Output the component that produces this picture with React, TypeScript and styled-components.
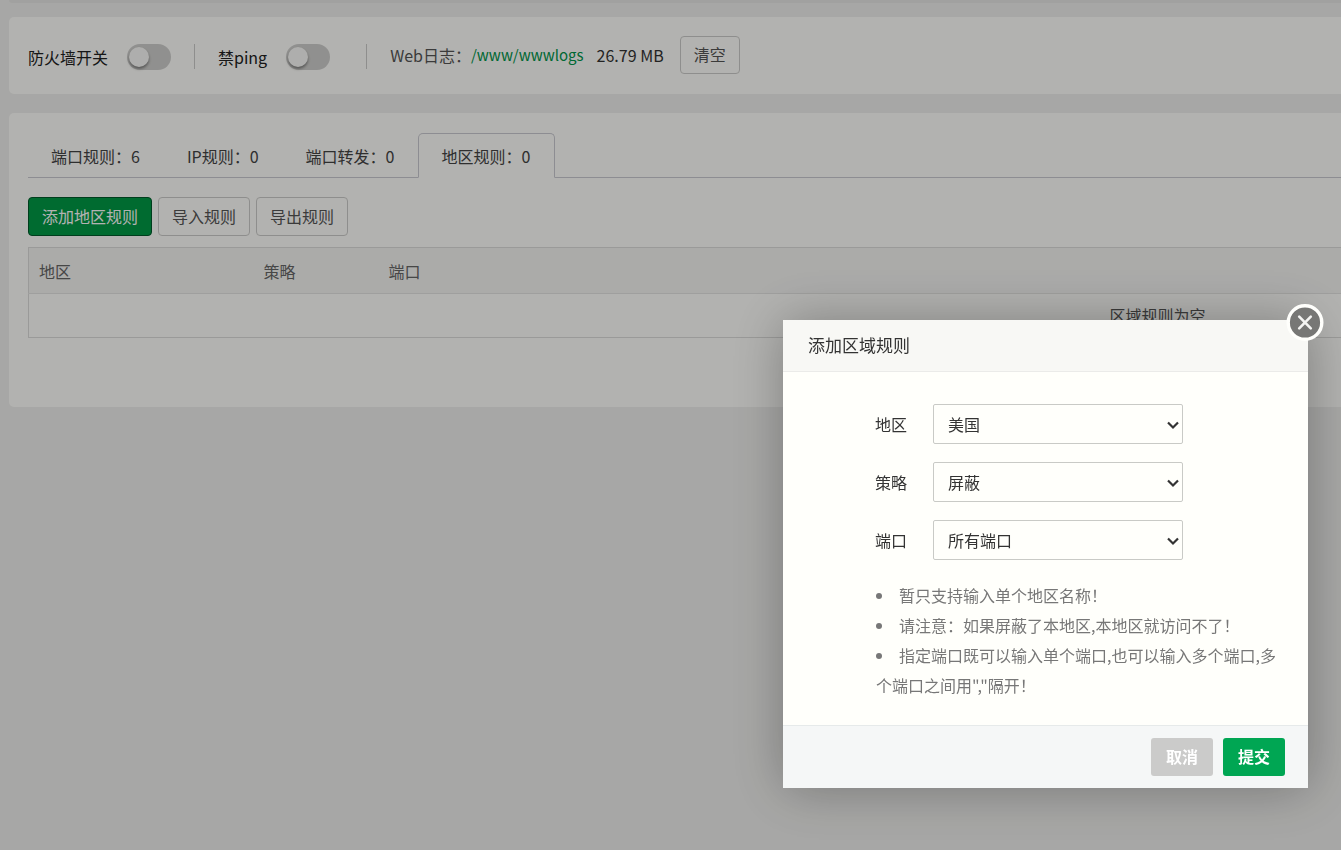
import React from "react";
import styled, { createGlobalStyle } from "styled-components";

const GlobalStyle = createGlobalStyle`
  * { box-sizing: border-box; }
  html, body { margin: 0; }
  body {
    background: #f0f0ee;
    color: #333;
    font-family: "Noto Sans CJK SC", "Noto Sans", sans-serif;
    font-size: 16px;
    line-height: 24px;
  }
  button, select, input { font: inherit; }
`;

const Viewport = styled.div`
  overflow: hidden;
  min-height: 100vh;
`;

const Page = styled.main`
  display: flex;
  flex-direction: column;
  gap: 19px;
  min-width: 2306px;
  padding-left: 9px;
`;

const Card = styled.section`
  background: #fffffc;
  border-radius: 5px;
`;

const CardTail = styled.div`
  height: 3px;
  margin-bottom: -5px;
  background: #e7e7e5;
  border-radius: 0 0 5px 5px;
`;

const FirewallBar = styled(Card)`
  display: flex;
  align-items: center;
  height: 77px;
  padding: 2px 19px 0;
`;

const SwitchLabel = styled.label`
  display: flex;
  align-items: center;
  gap: 19px;
  color: #222;
`;

const Switch = styled.input`
  appearance: none;
  width: 44px;
  height: 26px;
  margin: 0;
  border-radius: 13px;
  background: #cfcfcd;
  display: flex;
  align-items: center;
  padding: 0 2px;

  &::before {
    content: "";
    width: 20px;
    height: 20px;
    border-radius: 50%;
    background: #fafaf8;
    box-shadow: 0 2px 3px rgba(0, 0, 0, 0.4);
  }
  &:checked { background: #20a53a; justify-content: flex-end; }
`;

const Divider = styled.span`
  width: 1px;
  height: 25px;
  margin: 0 23px;
  background: #cccccb;
`;

const WideDivider = styled(Divider)`
  margin-left: 36px;
`;

const LogInfo = styled.div`
  display: flex;
  align-items: center;
  padding-bottom: 3px;
  color: #555;

  a { color: #00954a; font-size: 15px; text-decoration: none; }
  span { margin: 0 16px 0 13px; color: #333; }
`;

const Button = styled.button<{ $primary?: boolean }>`
  height: 39px;
  padding: 0 13px 2px;
  border: 1px solid ${(p) => (p.$primary ? "#00592a" : "#cccccb")};
  border-radius: 4px;
  background: ${(p) => (p.$primary ? "#009a46" : "#fffffc")};
  color: ${(p) => (p.$primary ? "#fff" : "#555")};
  line-height: 24px;
  cursor: pointer;
`;

const ClearButton = styled(Button)`
  height: 38px;
`;

const RulesCard = styled(Card)`
  padding: 20px 19px 69px;
`;

const Tabs = styled.div`
  display: flex;
  height: 45px;
  border-bottom: 1px solid #cbcbd2;
`;

const Tab = styled.button<{ $active?: boolean }>`
  height: 45px;
  padding: 0 24px 0 22px;
  border: 1px solid ${(p) => (p.$active ? "#cbcbd2" : "transparent")};
  border-bottom-color: ${(p) => (p.$active ? "#fffffc" : "transparent")};
  border-radius: 5px 5px 0 0;
  background: ${(p) => (p.$active ? "#fffffc" : "transparent")};
  color: #444;
  cursor: pointer;

  & + & { margin-left: -1px; }
`;

const Toolbar = styled.div`
  display: flex;
  gap: 6px;
  margin: 19px 0 11px;
`;

const RuleTable = styled.table`
  width: 100%;
  table-layout: fixed;
  border-collapse: collapse;
  border: 1px solid #dddddb;

  th {
    height: 46px;
    padding: 0 10px;
    background: #f5f5f3;
    border-bottom: 1px solid #e4e4e2;
    color: #666;
    font-weight: 400;
    text-align: left;
  }
  td {
    height: 44px;
    padding: 0 0 2px;
    color: #555;
    text-align: center;
  }
`;

const Shade = styled.div`
  position: fixed;
  inset: 0;
  background: rgba(0, 0, 0, 0.3);
`;

const Dialog = styled.div`
  position: fixed;
  top: 320px;
  right: 33px;
  width: 525px;
  background: #fffffb;
  box-shadow: 1px 1px 50px rgba(0, 0, 0, 0.3);
`;

const DialogTitle = styled.h2`
  margin: 0;
  padding: 12px 25px 13px;
  border-bottom: 1px solid #ebebe9;
  background: #f8f8f5;
  font-size: 17px;
  font-weight: 400;
  line-height: 26px;
`;

const CloseButton = styled.button`
  position: absolute;
  top: -17px;
  right: -16px;
  width: 38px;
  height: 38px;
  padding: 0;
  border: 0;
  background: none;
  cursor: pointer;

  svg { display: block; }
`;

const DialogBody = styled.div`
  padding: 32px 19px 25px 92px;
`;

const Fields = styled.div`
  display: grid;
  gap: 18px;
`;

const Field = styled.div`
  display: flex;
  align-items: center;
  gap: 26px;
`;

const SelectBox = styled.div`
  position: relative;
  width: 250px;

  select {
    appearance: none;
    display: block;
    width: 100%;
    height: 40px;
    padding: 0 24px 0 14px;
    border: 1px solid #c9cac6;
    border-radius: 2px;
    background: #fffffb;
    color: #333;
  }
  svg {
    position: absolute;
    top: 16px;
    right: 4px;
    pointer-events: none;
  }
`;

const Notes = styled.ul`
  margin: 20px 0 0;
  padding: 0 0 0 1px;
  list-style: disc inside;
  color: #777;
  line-height: 30px;
`;

const DialogFooter = styled.div`
  display: flex;
  justify-content: flex-end;
  gap: 10px;
  padding: 12px 23px;
  border-top: 1px solid #e6eaea;
  background: #f5f7f7;
`;

const ActionButton = styled.button<{ $tone: string }>`
  height: 38px;
  padding: 0 15px 2px;
  border: 0;
  border-radius: 3px;
  background: ${(p) => p.$tone};
  color: #fff;
  font-weight: 700;
  line-height: 24px;
  cursor: pointer;
`;

const tabs = ["端口规则：6", "IP规则：0", "端口转发：0", "地区规则：0"];

const fields = [
  { id: "area", label: "地区", value: "美国" },
  { id: "policy", label: "策略", value: "屏蔽" },
  { id: "port", label: "端口", value: "所有端口" },
];

const notes = [
  "暂只支持输入单个地区名称！",
  "请注意：如果屏蔽了本地区,本地区就访问不了！",
  '指定端口既可以输入单个端口,也可以输入多个端口,多个端口之间用","隔开！',
];

export default function App() {
  return (
    <>
      <GlobalStyle />
      <Viewport>
        <Page>
          <CardTail />
          <FirewallBar>
            <SwitchLabel>
              防火墙开关
              <Switch type="checkbox" role="switch" />
            </SwitchLabel>
            <Divider />
            <SwitchLabel>
              禁ping
              <Switch type="checkbox" role="switch" />
            </SwitchLabel>
            <WideDivider />
            <LogInfo>
              Web日志：<a href="#logs">/www/wwwlogs</a>
              <span>26.79 MB</span>
              <ClearButton type="button">清空</ClearButton>
            </LogInfo>
          </FirewallBar>
          <RulesCard>
            <Tabs role="tablist">
              {tabs.map((t, i) => (
                <Tab key={t} type="button" role="tab" aria-selected={i === 3} $active={i === 3}>
                  {t}
                </Tab>
              ))}
            </Tabs>
            <Toolbar>
              <Button type="button" $primary>添加地区规则</Button>
              <Button type="button">导入规则</Button>
              <Button type="button">导出规则</Button>
            </Toolbar>
            <RuleTable>
              <colgroup>
                <col width="225" />
                <col width="125" />
                <col />
              </colgroup>
              <thead>
                <tr>
                  <th>地区</th>
                  <th>策略</th>
                  <th>端口</th>
                </tr>
              </thead>
              <tbody>
                <tr>
                  <td colSpan={3}>区域规则为空</td>
                </tr>
              </tbody>
            </RuleTable>
          </RulesCard>
        </Page>
      </Viewport>
      <Shade />
      <Dialog role="dialog" aria-labelledby="dialog-title">
        <DialogTitle id="dialog-title">添加区域规则</DialogTitle>
        <CloseButton type="button" aria-label="关闭">
          <svg width="38" height="38" viewBox="0 0 38 38" fill="none">
            <circle cx="19" cy="19.5" r="16.8" fill="#777775" stroke="#fffffc" strokeWidth="3.4" />
            <path d="M13.2 13.7 24.8 25.3M24.8 13.7 13.2 25.3" stroke="#f4f4f2" strokeWidth="2.6" strokeLinecap="round" />
          </svg>
        </CloseButton>
        <DialogBody>
          <Fields>
            {fields.map((f) => (
              <Field key={f.id}>
                <label htmlFor={f.id}>{f.label}</label>
                <SelectBox>
                  <select id={f.id} defaultValue={f.value}>
                    <option>{f.value}</option>
                  </select>
                  <svg width="12" height="10" viewBox="0 0 12 10" fill="none" aria-hidden="true">
                    <path d="M1 2.5 6 7.5 11 2.5" stroke="#333" strokeWidth="2.2" />
                  </svg>
                </SelectBox>
              </Field>
            ))}
          </Fields>
          <Notes>
            {notes.map((n) => (
              <li key={n}>{n}</li>
            ))}
          </Notes>
        </DialogBody>
        <DialogFooter>
          <ActionButton type="button" $tone="#cbcbca">取消</ActionButton>
          <ActionButton type="button" $tone="#00a653">提交</ActionButton>
        </DialogFooter>
      </Dialog>
    </>
  );
}
